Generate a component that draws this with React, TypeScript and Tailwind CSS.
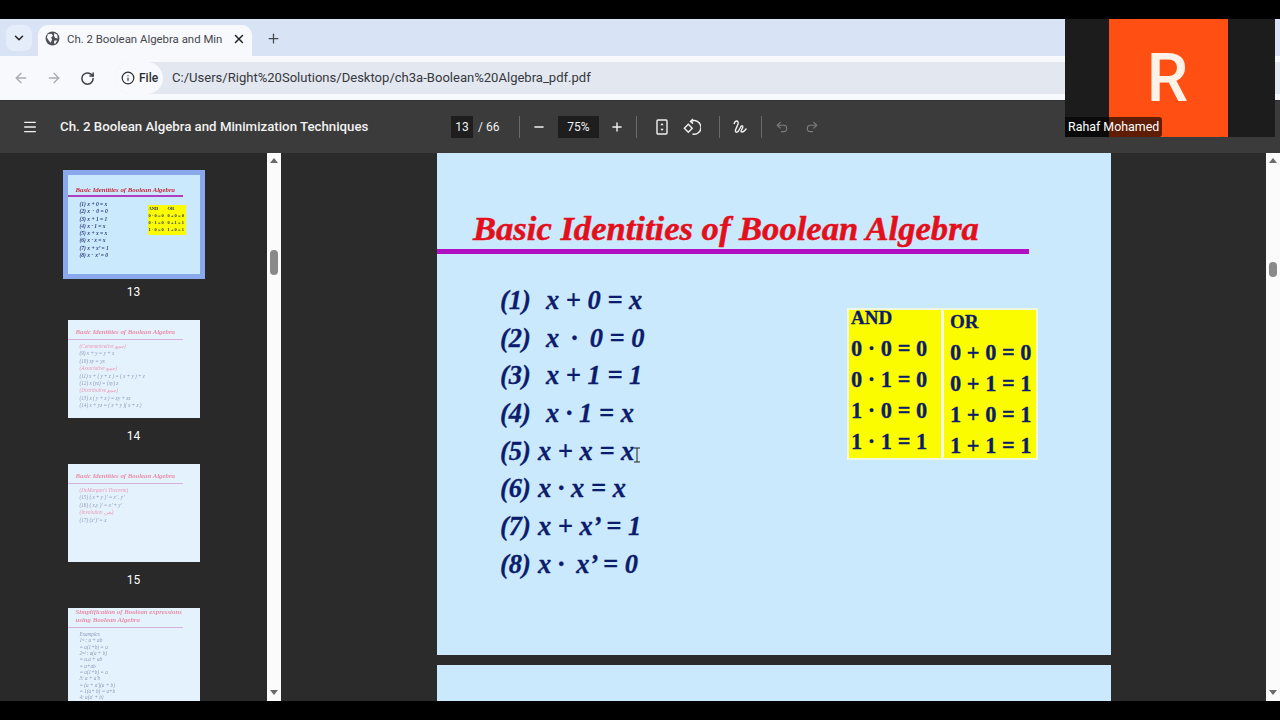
import { ArrowLeft, ArrowRight, ChevronDown, Info, Menu, Minus, Plus, RotateCw, Undo2, Redo2, X } from "lucide-react";

const eqs: [string, string, string][] = [
  ["(1)", "ml-[15px]", "x + 0 = x"],
  ["(2)", "ml-[15px]", "x\u2009 · \u20090 = 0"],
  ["(3)", "ml-[15px]", "x + 1 = 1"],
  ["(4)", "ml-[15px]", "x · 1 = x"],
  ["(5)", "ml-[7px]", "x + x = x"],
  ["(6)", "ml-[7px]", "x · x = x"],
  ["(7)", "ml-[7px]", "x + x’ = 1"],
  ["(8)", "ml-[7px]", "x · \u2009x’ = 0"],
];
const andRows = ["0 · 0 = 0", "0 · 1 = 0", "1 · 0 = 0", "1 · 1 = 1"];
const orRows = ["0 + 0 = 0", "0 + 1 = 1", "1 + 0 = 1", "1 + 1 = 1"];

function Sep() {
  return <div className="w-px h-[22px] bg-[#6a6a6a]" />;
}

function Thumb13() {
  return (
    <div className="w-[142px] h-[109px] border-[5px] border-[#8aa9ec] bg-[#cbe9fd] flex flex-col shrink-0 font-['Liberation_Serif',serif] blur-[0.5px]">
      <div className="h-[19px] flex items-end pl-[8px] text-[6.8px] leading-[8px] font-bold italic text-[#c8283a] whitespace-nowrap">Basic Identities of Boolean Algebra</div>
      <div className="h-[2px] w-[115px] mt-px bg-[#b03ec0]" />
      <div className="flex mt-[4px]">
        <div className="ml-[12px] w-[68px] flex flex-col text-[5.5px] leading-[7.3px] italic font-bold text-[#2c3c78] whitespace-nowrap">
          {eqs.map((e) => (<div key={e[0]}>{e[0]} {e[2]}</div>))}
        </div>
        <div className="mt-[4px] w-[38px] h-[30px] bg-[#fcfc00] flex text-[4.5px] leading-[7px] font-bold text-[#24306a] whitespace-nowrap pl-px">
          <div className="w-[19px]"><div>AND</div>{andRows.slice(0, 3).map((r) => <div key={r}>{r}</div>)}</div>
          <div><div>OR</div>{orRows.slice(0, 3).map((r) => <div key={r}>{r}</div>)}</div>
        </div>
      </div>
    </div>
  );
}

function PaleThumb({ lines, h, title, leading }: { lines: [string, boolean][]; h: string; title: string[]; leading: string }) {
  return (
    <div className={`w-[132px] ${h} bg-[#e4f2fd] flex flex-col shrink-0 overflow-hidden font-['Liberation_Serif',serif] blur-[0.5px]`}>
      <div className="h-[16px] flex flex-col justify-end pl-[8px] text-[6.8px] leading-[8px] font-bold italic text-[#ea8fa6] whitespace-nowrap">
        {title.map((t) => <div key={t}>{t}</div>)}
      </div>
      <div className="h-px w-[115px] mt-[3px] bg-[#d8b0dc] shrink-0" />
      <div className={`pl-[12px] mt-[3px] flex flex-col text-[5.2px] ${leading} italic whitespace-nowrap`}>
        {lines.map((l, i) => (
          <div key={i} className={l[1] ? "text-[#ec9ab4]" : "text-[#8c9ab8]"}>{l[0]}</div>
        ))}
      </div>
    </div>
  );
}

export default function App() {
  return (
    <div className="relative w-[1280px] h-[720px] overflow-hidden bg-black flex flex-col font-['Roboto',sans-serif]">
      <div className="h-[19px] shrink-0 bg-black" />

      {/* tab strip */}
      <div className="h-[37px] shrink-0 bg-[#d9e3f6] flex items-end pl-[6px] text-[#3a3d42]">
        <div className="w-[26px] h-[26px] mb-[5px] rounded-lg bg-[#e6edfa] flex items-center justify-center">
          <ChevronDown size={14} strokeWidth={2.6} className="text-[#222]" />
        </div>
        <div className="ml-[6px] w-[214px] h-[31px] bg-[#f8f9fd] rounded-t-[10px] flex items-center pl-[7px] pr-[6px] pb-[4px]">
          <svg width="15" height="15" viewBox="0 0 16 16" className="shrink-0">
            <circle cx="8" cy="8" r="7.4" fill="#4d5157" />
            <path d="M3 3.5 L7 3 L8.5 5 L6.5 7 L7.5 9 L6 12.5 L4 10 L2 7 Z M10 2 L13 4 L13.5 8 L11 7.5 L9.5 5 Z M10 10 L13 10 L11 13.5 L9.5 13 Z" fill="#f8f9fd" />
          </svg>
          <span className="ml-[7px] w-[158px] whitespace-nowrap text-[11.4px] leading-[16px] text-[#44474c]">Ch. 2 Boolean Algebra and Min</span>
          <X size={14} strokeWidth={2.6} className="ml-[8px] text-[#222]" />
        </div>
        <Plus size={15} strokeWidth={2} className="ml-[14px] mb-[10px] text-[#44474c]" />
      </div>

      {/* address bar */}
      <div className="h-[45px] shrink-0 bg-[#f8f9fd] flex items-center pl-[13px] border-b border-[#333]">
        <ArrowLeft size={16} className="text-[#a8abb0]" />
        <ArrowRight size={16} className="ml-[17px] text-[#a8abb0]" />
        <RotateCw size={15} strokeWidth={2.4} className="ml-[18px] text-[#3c3f44]" />
        <div className="ml-[20px] flex-1 h-[32px] rounded-l-full bg-[#e3e7f0] flex items-center">
          <div className="h-[32px] w-[48px] rounded-full bg-[#f8f9fd] flex items-center pl-[6px] text-[12px] font-medium text-[#2a2c30]">
            <Info size={14} className="text-[#2a2c30]" />
            <span className="ml-[4px]">File</span>
          </div>
          <span className="ml-[9px] text-[13.05px] text-[#35383d] whitespace-nowrap">C:/Users/Right%20Solutions/Desktop/ch3a-Boolean%20Algebra_pdf.pdf</span>
        </div>
      </div>

      {/* pdf toolbar */}
      <div className="h-[52px] shrink-0 bg-[#3b3b3b] flex items-center text-[#f1f1f1] relative">
        <Menu size={16} strokeWidth={2} className="ml-[22px]" />
        <span className="ml-[22px] w-[392px] text-[13.25px] font-medium whitespace-nowrap">Ch. 2 Boolean Algebra and Minimization Techniques</span>
        <div className="w-[22px] h-[22px] bg-[#1e1e1e] flex items-center justify-center text-[12px] -ml-px">13</div>
        <span className="ml-[5px] text-[12px] w-[24px] whitespace-nowrap">/ 66</span>
        <div className="ml-[17px]"><Sep /></div>
        <Minus size={14} strokeWidth={2.4} className="ml-[12px]" />
        <div className="ml-[12px] w-[41px] h-[22px] bg-[#1e1e1e] flex items-center justify-center text-[12px]">75%</div>
        <Plus size={14} strokeWidth={2.4} className="ml-[11px]" />
        <div className="ml-[12px]"><Sep /></div>
        <svg width="14" height="16" viewBox="0 0 14 16" fill="none" stroke="#f1f1f1" strokeWidth="1.4" className="ml-[18px]">
          <rect x="2" y="1" width="10" height="14" rx="1" />
          <path d="M7 4 L5.3 6.2 H8.7 Z M7 12 L5.3 9.8 H8.7 Z" fill="#f1f1f1" stroke="none" />
        </svg>
        <svg width="18" height="18" viewBox="0 0 18 18" fill="none" stroke="#f1f1f1" strokeWidth="1.4" className="ml-[14px]">
          <rect x="2.5" y="7.5" width="5.6" height="5.6" transform="rotate(45 5.3 10.3)" />
          <path d="M8 3.4 A6.8 6.8 0 1 1 9.5 16" />
          <path d="M10 1 L7.5 3.4 L10 5.6" />
        </svg>
        <div className="ml-[18px]"><Sep /></div>
        <svg width="16" height="16" viewBox="0 0 16 16" fill="none" stroke="#f1f1f1" strokeWidth="1.4" className="ml-[12px]">
          <path d="M2 5 C3 1 7 1 6 5 L3.5 11 C3 14 6 14 7 11 L9 7.5 C10 6 11.5 7 10.5 9 C9.5 11 8 13 10 13 C12 13 13 11 14.5 9.5" />
        </svg>
        <div className="ml-[13px]"><Sep /></div>
        <Undo2 size={14} className="ml-[13px] text-[#7d7d7d]" />
        <Redo2 size={14} className="ml-[16px] text-[#7d7d7d]" />
      </div>

      {/* body */}
      <div className="h-[548px] shrink-0 flex overflow-hidden">
        <div className="w-[267px] shrink-0 bg-[#292929] flex flex-col items-center pt-[17px] overflow-hidden text-white text-[12px]">
          <Thumb13 />
          <div className="mt-[5px] h-[16px] leading-[16px]">13</div>
          <div className="mt-[20px]">
            <PaleThumb h="h-[98px]" leading="leading-[7.4px]" title={["Basic Identities of Boolean Algebra"]} lines={[["(Communicative  جمع)", true], ["(9) x + y = y + x", false], ["(10) xy = yx", false], ["(Associative  جمع)", true], ["(11) x + ( y + z ) = ( x + y ) + z", false], ["(12) x (yz) = (xy) z", false], ["(Distributive  جمع)", true], ["(13) x ( y + z ) = xy + xz", false], ["(14) x + yz = ( x + y )( x + z )", false]]} />
          </div>
          <div className="mt-[10px] h-[16px] leading-[16px]">14</div>
          <div className="mt-[20px]">
            <PaleThumb h="h-[98px]" leading="leading-[7.4px]" title={["Basic Identities of Boolean Algebra"]} lines={[["  (DeMorgan's Theorem)", true], ["  (15) ( x + y )’ = x’ . y’", false], ["  (16) ( x.y )’ = x’ + y’", false], ["  (Involution  نفي)", true], ["  (17) (x’)’ = x", false]]} />
          </div>
          <div className="mt-[10px] h-[16px] leading-[16px]">15</div>
          <div className="mt-[20px]">
            <PaleThumb h="h-[93px]" leading="leading-[6.35px]" title={["Simplification of Boolean expressions", "using  Boolean Algebra"]} lines={[["Examples", false], ["1ˢᵗ : a + ab", false], ["   = a(1+b) = a", false], ["2ⁿᵈ : a(a + b)", false], ["   = a.a + ab", false], ["   = a+ab", false], ["   = a(1+b) = a", false], ["3: a + a'b", false], ["   = (a + a')(a + b)", false], ["   = 1(a+ b) = a+b", false], ["4: a(a' + b)", false]]} />
          </div>
        </div>

        <div className="w-[14px] shrink-0 bg-[#fbfbfb] flex flex-col items-center relative">
          <div className="mt-[5px] w-0 h-0 border-l-[4.5px] border-r-[4.5px] border-b-[5px] border-l-transparent border-r-transparent border-b-[#6b6b6b]" />
          <div className="mt-[87px] w-[8px] h-[25px] rounded-full bg-[#8a8a8a]" />
          <div className="absolute bottom-[6px] w-0 h-0 border-l-[4.5px] border-r-[4.5px] border-t-[5px] border-l-transparent border-r-transparent border-t-[#6b6b6b]" />
        </div>

        <div className="flex-1 bg-[#2b2b2b] flex flex-col items-center pl-px overflow-hidden font-['Liberation_Serif',serif]">
          <div className="w-[674px] h-[502px] shrink-0 bg-[#cbe9fd] flex flex-col">
            <div className="h-[96px] flex items-end pl-[36px] text-[34.6px] leading-[42px] font-bold italic text-[#e3101c] whitespace-nowrap [-webkit-text-stroke:0.5px_#e3101c]">Basic Identities of Boolean Algebra</div>
            <div className="h-[5px] w-[592px] bg-[#b00fc4]" />
            <div className="flex mt-[28px]">
              <div className="ml-[63px] w-[347px] flex flex-col text-[26.5px] leading-[37.7px] font-bold italic text-[#0c1c6c] whitespace-pre [-webkit-text-stroke:0.3px_#0c1c6c]">
                {eqs.map((e) => (
                  <div key={e[0]} className="flex h-[37.7px]"><span>{e[0]}</span><span className={e[1]}>{e[2]}</span></div>
                ))}
              </div>
              <div className="mt-[26px] w-[191px] h-[152px] bg-[#f2f7e0] p-[2px] flex gap-[3px] font-bold text-[#0c1c6c] text-[22.4px] whitespace-pre [-webkit-text-stroke:0.3px_#0c1c6c]">
                <div className="w-[92px] bg-[#fcfc00] pl-[2px] flex flex-col">
                  <div className="text-[19px] leading-[20px] mt-[-2px]">AND</div>
                  <div className="flex flex-col mt-[5px]">
                    {andRows.map((r) => <div key={r} className="leading-[31px]">{r}</div>)}
                  </div>
                </div>
                <div className="flex-1 bg-[#fcfc00] pl-[6px] flex flex-col">
                  <div className="text-[19px] leading-[20px] mt-[2px]">OR</div>
                  <div className="flex flex-col mt-[5px]">
                    {orRows.map((r) => <div key={r} className="leading-[31px]">{r}</div>)}
                  </div>
                </div>
              </div>
            </div>
          </div>
          <div className="mt-[10px] w-[674px] h-[36px] shrink-0 bg-[#cbe9fd]" />
        </div>

        <div className="w-[14px] shrink-0 bg-[#fbfbfb] flex flex-col items-center relative">
          <div className="mt-[5px] w-0 h-0 border-l-[4.5px] border-r-[4.5px] border-b-[5px] border-l-transparent border-r-transparent border-b-[#6b6b6b]" />
          <div className="mt-[99px] w-[8px] h-[15px] rounded-full bg-[#8a8a8a]" />
          <div className="absolute bottom-[6px] w-0 h-0 border-l-[4.5px] border-r-[4.5px] border-t-[5px] border-l-transparent border-r-transparent border-t-[#6b6b6b]" />
        </div>
      </div>

      {/* cursor */}
      <svg width="8" height="16" viewBox="0 0 8 16" fill="none" stroke="#222" strokeWidth="1" className="absolute left-[633px] top-[447px]">
        <path d="M1 1 H7 M4 1 V15 M1 15 H7" />
      </svg>

      {/* participant video */}
      <div className="absolute left-[1065px] top-[19px] w-[210px] h-[118px] bg-[#1c1c1c] flex justify-center">
        <div className="w-[119px] -ml-[3px] bg-[#ff4f12] flex items-center justify-center text-[#fdf2e8] text-[66px] leading-[70px] pr-[2px] pt-px font-medium font-['Roboto',sans-serif]">R</div>
        <div className="absolute left-0 bottom-0 w-[97px] h-[20px] bg-[#000000a0] rounded-r-[3px] text-white text-[12.4px] leading-[20px] pl-[3px] whitespace-nowrap font-['Roboto',sans-serif]">Rahaf Mohamed</div>
      </div>
    </div>
  );
}
